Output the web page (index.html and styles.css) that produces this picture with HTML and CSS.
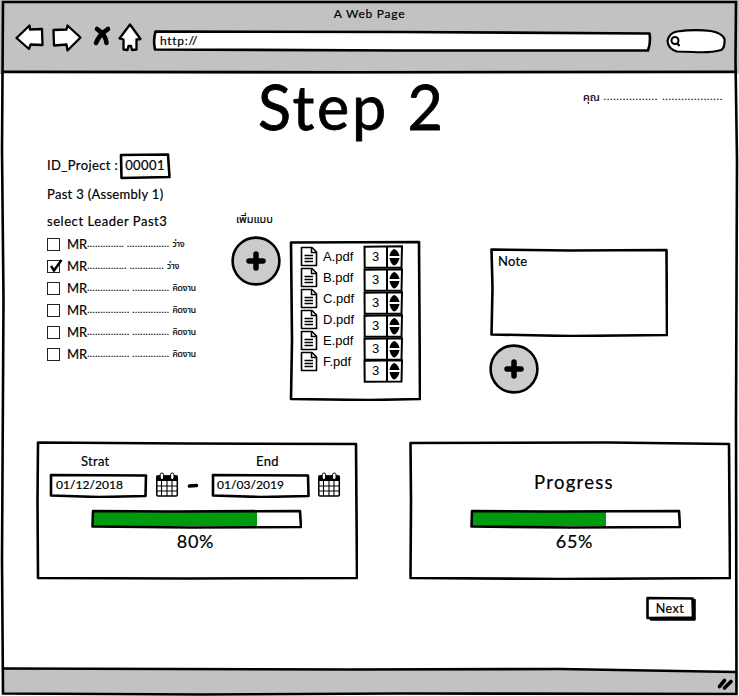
FILE: index.html
```
<!DOCTYPE html>
<html lang="th">
<head>
<meta charset="utf-8">
<title>A Web Page</title>
<link rel="stylesheet" href="styles.css">
</head>
<body>
<svg width="0" height="0" class="defs">
  <symbol id="file" viewBox="0 0 18 21"><path d="M1.500 1.500H12L16.500 6V19.500H1.500Z" fill="#fff" stroke="#000" stroke-width="1.600" stroke-linejoin="round"/><path d="M11.500 1.500V6.500H16.500M4.500 9.500H13M4.500 12.500H13M4.500 15.500H13" fill="none" stroke="#000" stroke-width="1.500"/></symbol>
  <symbol id="plus" viewBox="0 0 50 50"><circle cx="25" cy="25" r="23.400" fill="#ccc" stroke="#000" stroke-width="2.600"/><path d="M25 18V32M18 25H32" stroke="#000" stroke-width="5.500" stroke-linecap="round"/></symbol>
  <symbol id="cal" viewBox="0 0 24 25"><rect x="1.800" y="4" width="20.500" height="20" rx="1.200" fill="#fff" stroke="#000" stroke-width="1.500"/><path d="M1.500 3.500H22.500V9H1.500Z"/><path d="M6.500 9V24M12 9V24M17 9V24M2 14H22M2 19H22" stroke="#000" stroke-width="1.100"/><rect x="5.200" y="1" width="3.400" height="6.500" rx="1.700" fill="#fff" stroke="#000"/><rect x="15.600" y="1" width="3.400" height="6.500" rx="1.700" fill="#fff" stroke="#000"/></symbol>
  <symbol id="spin" viewBox="0 0 40 24"><path d="M1.500 1.700L39 1.300L38.500 22.600L1.700 22.800ZM24 1.500V22.500" fill="#fff" stroke="#000" stroke-width="2"/><path d="M26.500 11C27 7 30 4 31.200 4S36 7 36.500 11ZM26.500 13H36.500C36 17 32.500 20.500 31.200 20.500S27 17 26.500 13Z"/></symbol>
</svg>
<div class="window">
  <svg class="frame" viewBox="0 0 739 696"><path d="M3 2L736 2L735.500 60L737 160L736 420L736.500 694L400 693.500L200 694.500L3 693.500L2 560L3.500 300L2 150Z"/></svg>
  <header class="chrome">
    <div class="caption">A Web Page</div>
    <div class="toolbar">
      <svg class="nav" viewBox="0 0 130 32"><g fill="#fff" stroke="#000" stroke-width="2.300" stroke-linejoin="round"><path d="M1.500 16L14.500 3.500L15 7.500L27 7L27.500 23L15.500 22.500L14 27Z"/><path d="M38.500 8L51.500 7.500L52.500 3.500L65.500 15.500L52.500 28.500L51.500 22.500L39 23.500Z"/><path d="M115 2.500L125.500 17L121.500 17.500L121.500 27.500L117 28L116 24L113.500 24L112.500 28L108.500 27.500L108.500 17.500L104.500 16.500Z"/></g><path d="M82 7Q91 13 91.500 21M93 7Q84 13 81 21" fill="none" stroke="#000" stroke-width="4.600" stroke-linecap="round"/></svg>
      <div class="address"><svg class="sketch" viewBox="0 0 500 22"><path d="M3.500 1.500L250 2L497.500 3.500Q499 12 496 20.500L250 20.500L3 19.500Q1 10 3.500 1.500Z"/></svg><span>http://</span></div>
      <svg class="search" viewBox="0 0 62 26"><path d="M12 3.500Q30 1 46 3Q57 5 59.500 11Q60 20 56 22Q46 25 28 24L12 23.500Q3 21 2.500 13Q4 5 12 3.500Z" fill="#fff" stroke="#000" stroke-width="2.200"/><circle cx="10" cy="12.500" r="3.500" fill="#fff" stroke="#000" stroke-width="2"/><path d="M12 15L14.500 18" stroke="#000" stroke-width="2.200"/></svg>
    </div>
    <svg class="edge" viewBox="0 0 735 4"><path d="M0 1.800L350 2.200L735 1.800"/></svg>
  </header>

  <main>
    <div class="heading"><h1>Step 2</h1><div class="user"><span class="th">คุณ</span><span class="dots udots">.................</span><span class="dots udots">...................</span></div></div>

    <section class="middle">
      <div class="leaders">
        <div class="project"><span>ID_Project :</span><div class="idbox"><svg class="sketch" viewBox="0 0 52 28"><path d="M2 3L49 2.500L50.500 25L2.500 26Z"/></svg><span>00001</span></div></div>
        <p class="part">Past 3 (Assembly 1)</p>
        <p class="select">select Leader Past3</p>
        <ul>
          <li><i class="check"></i><b>MR</b><span class="dots">.............. ................</span><span class="th">ว่าง</span></li>
          <li><i class="check"><svg viewBox="0 0 17 16"><path d="M4 8L7 12.500L14.500 2" fill="none" stroke="#000" stroke-width="2.500"/></svg></i><b>MR</b><span class="dots">............... .............</span><span class="th">ว่าง</span></li>
          <li><i class="check"></i><b>MR</b><span class="dots">................ ..............</span><span class="th">คิดงาน</span></li>
          <li><i class="check"></i><b>MR</b><span class="dots">................ ..............</span><span class="th">คิดงาน</span></li>
          <li><i class="check"></i><b>MR</b><span class="dots">................ ..............</span><span class="th">คิดงาน</span></li>
          <li><i class="check"></i><b>MR</b><span class="dots">................ ..............</span><span class="th">คิดงาน</span></li>
        </ul>
      </div>
      <div class="add"><div class="addlabel">เพิ่มแบบ</div><svg class="plus"><use href="#plus"/></svg></div>
      <div class="files"><svg class="sketch" viewBox="0 0 132 161"><path d="M2 2.500L130 2L131 159L80 160L2 159L3 100Z"/></svg>
        <div class="names">
          <div><svg><use href="#file"/></svg>A.pdf</div><div><svg><use href="#file"/></svg>B.pdf</div><div><svg><use href="#file"/></svg>C.pdf</div><div><svg><use href="#file"/></svg>D.pdf</div><div><svg><use href="#file"/></svg>E.pdf</div><div><svg><use href="#file"/></svg>F.pdf</div>
        </div>
        <div class="counts">
          <div><svg><use href="#spin"/></svg><span>3</span></div><div><svg><use href="#spin"/></svg><span>3</span></div><div><svg><use href="#spin"/></svg><span>3</span></div><div><svg><use href="#spin"/></svg><span>3</span></div><div><svg><use href="#spin"/></svg><span>3</span></div><div><svg><use href="#spin"/></svg><span>3</span></div>
        </div>
      </div>
      <div class="notes"><div class="note"><svg class="sketch" viewBox="0 0 178 89"><path d="M1.500 1.500L80 2.500L176.500 2L177 87L80 88L1.500 86.500L2.500 40Z"/></svg><span>Note</span></div><svg class="plus"><use href="#plus"/></svg></div>
    </section>

    <section class="panels">
      <div class="panel dates"><svg class="sketch" viewBox="0 0 322 139"><path d="M2 1.500L150 2.500L320 3L321 137L150 137.500L2 137L1.500 60Z"/></svg>
        <div class="range">
          <div class="field"><label>Strat</label><div class="date"><svg class="sketch" viewBox="0 0 99 25"><path d="M2 2L97 2.500L96.500 23L50 24L2 22.500Z"/></svg><span>01/12/2018</span></div></div>
          <svg class="cal"><use href="#cal"/></svg>
          <svg class="dash" viewBox="0 0 12 5"><path d="M2.500 3L9.500 2.500" stroke="#000" stroke-width="3.600" stroke-linecap="round"/></svg>
          <div class="field end"><label>End</label><div class="date"><svg class="sketch" viewBox="0 0 99 25"><path d="M2 2L97 2.500L97.500 23L50 24L2 22.500Z"/></svg><span>01/03/2019</span></div></div>
          <svg class="cal"><use href="#cal"/></svg>
        </div>
        <div class="bar"><div class="fill" style="width:79%"></div><svg class="sketch line" viewBox="0 0 211 20"><path d="M2 2L80 2.500L209 2L210 18L100 18.500L1.500 17.500Z"/></svg></div>
        <div class="pct">80%</div>
      </div>
      <div class="panel prog"><svg class="sketch" viewBox="0 0 322 139"><path d="M1.500 2L200 1.500L320 3L321 137L150 138L1.500 137L2 60Z"/></svg>
        <div class="ptitle">Progress</div>
        <div class="bar"><div class="fill" style="width:64.500%"></div><svg class="sketch line" viewBox="0 0 211 20"><path d="M2 2L80 2.500L209 2L210 18L100 18.500L1.500 17.500Z"/></svg></div>
        <div class="pct">65%</div>
      </div>
    </section>
    <div class="actions"><button class="next"><svg class="sketch" viewBox="0 0 51 26"><path d="M5 23.500H48.500V4Z"/><path d="M1.500 2L46.500 2.500L47 21.500L1.500 22Z"/></svg><span>Next</span></button></div>
  </main>
  <footer><svg viewBox="0 0 739 30"><path d="M3 2.500L350 3.500L560 3L737 6V28H3Z" fill="#c2c2c2"/><path d="M3 2.500L350 3.500L560 3L737 6" fill="none" stroke="#000" stroke-width="2.600"/><path d="M719.500 20.500L724.500 14.500M724.500 22L731 15.500" stroke="#000" stroke-width="3.600" stroke-linecap="round"/></svg></footer>
</div>
</body>
</html>
```
FILE: styles.css
```
* { box-sizing: border-box; margin: 0; padding: 0; }
body { width: 739px; height: 696px; overflow: hidden; background: #fff; color: #000; font: 13px/20px Lato, "Noto Sans Thai", "Noto Sans", sans-serif; -webkit-text-stroke: .2px #000; }
svg { display: block; flex: none; }
.defs { position: absolute; }
.window { position: relative; display: flex; flex-direction: column; height: 696px; }
.frame { position: absolute; inset: 0; z-index: 3; fill: none; stroke: #000; stroke-width: 2.6; pointer-events: none; }
.sketch { position: absolute; inset: 0; width: 100%; height: 100%; fill: #fff; stroke: #000; stroke-width: 2.6; stroke-linejoin: round; }
.sketch + span { position: relative; }
.line { fill: none; }

.chrome { height: 74px; padding: 4px 2px 0; background: #c2c2c2; display: flex; flex-direction: column; }
.edge { width: 735px; height: 4px; fill: none; stroke: #000; stroke-width: 2.6; }
.caption { height: 20px; line-height: 20px; text-align: center; font-size: 12px; letter-spacing: .75px; }
.toolbar { display: flex; height: 46px; }
.nav { width: 130px; height: 32px; margin: -2px 0 0 13px; }
.address { position: relative; width: 500px; height: 22px; margin: 6px 0 0 7px; padding-left: 8px; font-size: 12px; line-height: 21px; letter-spacing: .7px; }
.search { width: 62px; height: 26px; margin: 4px 0 0 13px; }

main { height: 592px; }
.heading { display: flex; height: 78px; }
h1 { width: 182px; margin: -2px 0 0 258px; font-size: 61px; line-height: 70px; font-weight: 400; letter-spacing: 2.8px; white-space: nowrap; -webkit-text-stroke: .8px #000; }
.user { display: flex; gap: 4px; margin: 12px 0 0 143px; font-size: 11px; line-height: 22px; white-space: nowrap; }
.dots { letter-spacing: .52px; font-size: 9px; }
.udots { letter-spacing: 1.08px; }

.middle { display: flex; height: 289px; }
.leaders { width: 155px; margin-left: 47px; }
.project { display: flex; height: 28px; line-height: 27px; white-space: nowrap; letter-spacing: .4px; }
.project > span { width: 72px; }
.idbox { position: relative; width: 52px; height: 28px; text-align: center; }
.part { margin-top: 3px; line-height: 22px; letter-spacing: .3px; }
.select { margin-top: 5px; line-height: 22px; letter-spacing: .55px; }
ul { list-style: none; margin-top: 1px; }
li { display: flex; align-items: center; height: 22px; white-space: nowrap; }
li b { font-weight: 400; margin-left: 6px; }
li .th { font-size: 8.5px; margin-left: 3px; }
.check { position: relative; width: 13px; height: 13px; border: 1.5px solid #222; margin-right: 1px; }
.check svg { position: absolute; left: -1px; top: -3px; width: 17px; height: 16px; }
.add { width: 50px; margin: 57px 0 0 29px; }
.addlabel { margin-left: 5px; height: 27px; font-size: 11px; white-space: nowrap; }
.plus { width: 50px; height: 50px; }
.files { position: relative; display: flex; width: 132px; height: 161px; margin: 88px 0 0 8px; font-family: "Liberation Sans", sans-serif; -webkit-text-stroke: 0; }
.names { position: relative; margin: 6px 0 0 11px; width: 63px; }
.names div { display: flex; align-items: center; gap: 5px; height: 21px; }
.names svg { width: 18px; height: 21px; }
.counts { position: relative; padding-top: 5px; }
.counts div { position: relative; height: 22.9px; padding-left: 9px; line-height: 24px; }
.counts svg { position: absolute; left: 0; top: 0; width: 40px; height: 24px; }
.counts span { position: relative; }
.notes { width: 178px; margin: 96px 0 0 69px; }
.note { position: relative; width: 178px; height: 89px; padding: 3px 8px; letter-spacing: .2px; }
.notes .plus { margin: 7px 0 0 -1px; }

.panels { display: flex; gap: 51px; padding-left: 36px; }
.panel { position: relative; width: 322px; height: 139px; }
.range { position: relative; display: flex; height: 68px; padding: 10px 0 0 13px; align-items: flex-start; }
.field { width: 99px; }
.field label { display: block; height: 22px; line-height: 20px; margin-left: 32px; letter-spacing: .3px; }
.end { width: 101px; }
.end label { margin-left: 46px; }
.date { position: relative; height: 25px; padding-left: 7px; line-height: 24px; font-size: 12px; letter-spacing: .05px; }
.cal { width: 24px; height: 25px; margin: 21px 0 0 7px; }
.end + .cal { margin-left: 6px; }
.dash { width: 12px; height: 5px; margin: 32px 11px 0 8px; }
.bar { position: relative; width: 211px; height: 20px; margin-left: 55px; padding: 2px; }
.fill { height: 15px; background: #009b0c; }
.pct { position: relative; width: 211px; margin-left: 54px; text-align: center; font-size: 18px; line-height: 24px; letter-spacing: .8px; }
.ptitle { position: relative; height: 68px; padding: 29px 0 0 125px; font-size: 18.5px; line-height: 24px; letter-spacing: 1.3px; }
.prog .bar { margin-left: 61px; }
.prog .pct { margin-left: 60px; }
.actions { padding: 16px 0 0 646px; }
.next { position: relative; display: block; width: 51px; height: 26px; border: 0; background: none; color: #000; font: 12.5px/24px Lato, sans-serif; letter-spacing: .5px; padding-right: 3px; }
.next path:first-child { fill: #000; }
footer { height: 30px; }
footer svg { width: 739px; height: 30px; }
```
